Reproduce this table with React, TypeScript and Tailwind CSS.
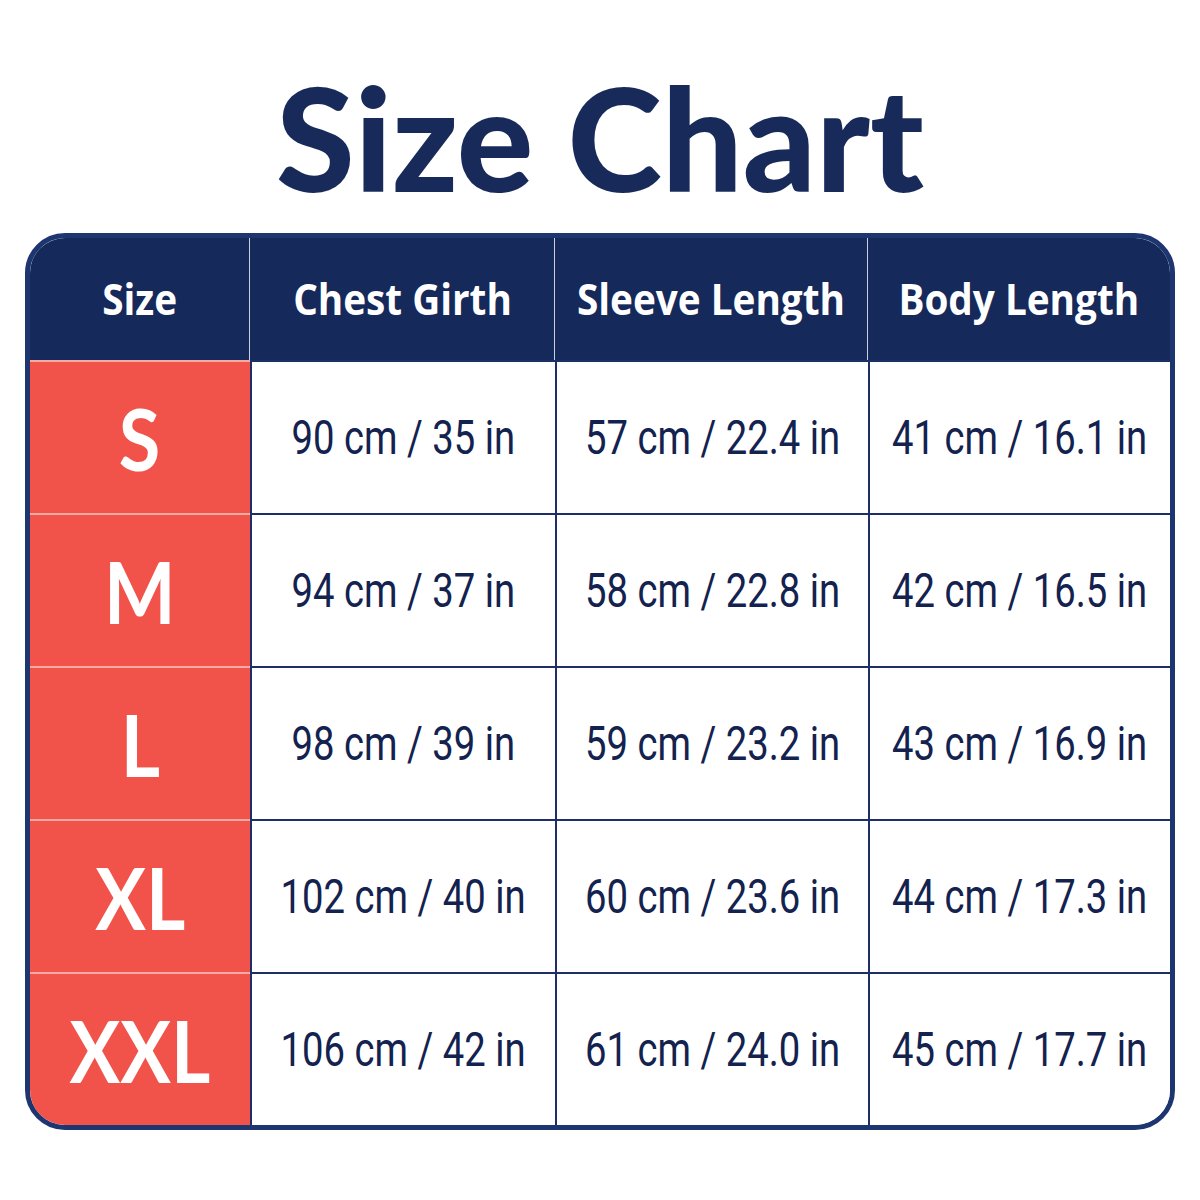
const headers = ["Size", "Chest Girth", "Sleeve Length", "Body Length"]

const rows = [
    { size: "S", chest: "90 cm / 35 in", sleeve: "57 cm / 22.4 in", body: "41 cm / 16.1 in" },
    { size: "M", chest: "94 cm / 37 in", sleeve: "58 cm / 22.8 in", body: "42 cm / 16.5 in" },
    { size: "L", chest: "98 cm / 39 in", sleeve: "59 cm / 23.2 in", body: "43 cm / 16.9 in" },
    { size: "XL", chest: "102 cm / 40 in", sleeve: "60 cm / 23.6 in", body: "44 cm / 17.3 in" },
    { size: "XXL", chest: "106 cm / 42 in", sleeve: "61 cm / 24.0 in", body: "45 cm / 17.7 in" },
]

const Value = ({ text }: { text: string }) => (
    <div className="flex items-center justify-center bg-white border-l-2 border-t-2 border-[#1c2f66]">
        <span className="inline-block scale-x-[0.78] whitespace-nowrap text-[49px] text-[#13224f] font-['Roboto',sans-serif]">
            {text}
        </span>
    </div>
)

const App = () => {
    return (
        <div className="w-[1200px] h-[1200px] bg-white flex flex-col items-center pt-[65px]">
            <h1 className="text-[143px] leading-none font-black text-[#172a5a] font-['Lato',sans-serif]">
                Size Chart
            </h1>

            <div className="mt-[25px] w-[1150px] border-[5px] border-[#1e3670] rounded-[40px] overflow-hidden bg-white">
                <div className="grid grid-cols-[220px_305px_313px_302px]">
                    {headers.map((h, i) => (
                        <div
                            key={h}
                            className={`h-[122px] flex items-center justify-center bg-[#15295b] ${i < 3 ? "border-r border-[#c8cfe0]" : ""}`}
                        >
                            <span className="inline-block scale-x-[0.9] whitespace-nowrap text-[43px] font-bold text-white font-['Open_Sans',sans-serif]">
                                {h}
                            </span>
                        </div>
                    ))}

                    {rows.map(r => (
                        <div key={r.size} className="contents">
                            <div className="h-[153px] flex items-center justify-center bg-[#f1534a] border-t-2 border-[#f6aaa4]">
                                <span className="inline-block scale-x-[0.88] text-[86px] leading-none font-bold text-white font-['Lato',sans-serif]">
                                    {r.size}
                                </span>
                            </div>
                            <Value text={r.chest} />
                            <Value text={r.sleeve} />
                            <Value text={r.body} />
                        </div>
                    ))}
                </div>
            </div>
        </div>
    )
}

export default App
